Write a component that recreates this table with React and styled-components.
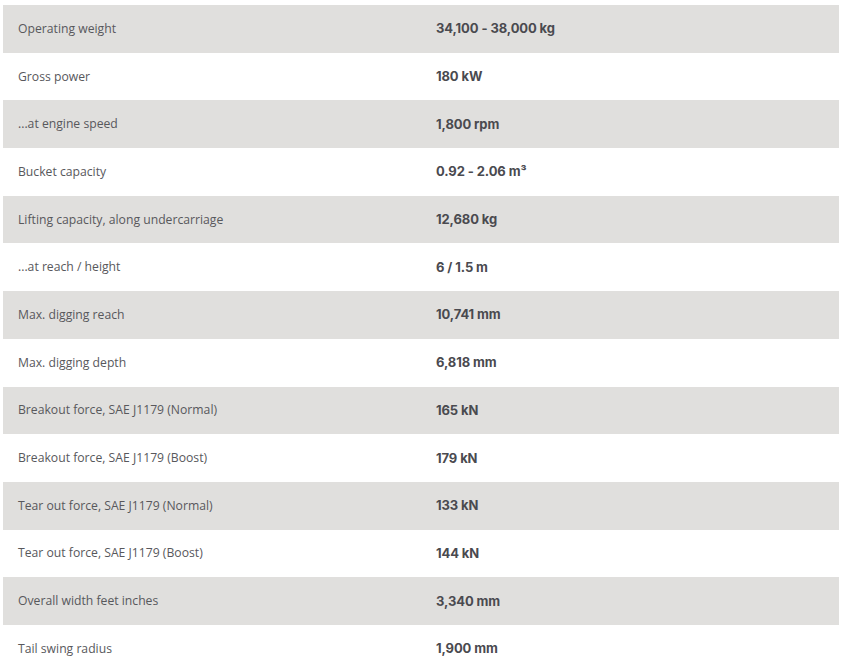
import React from "react";
import styled, { createGlobalStyle } from "styled-components";

const Global = createGlobalStyle`
  html, body { margin: 0; padding: 0; background: #fff; }
  body { padding: 5px 5px 0 3px; }
`;

const Table = styled.div`
  width: 836px;
  display: grid;
  grid-template-columns: 418px 418px;
`;

const Row = styled.div`
  display: contents;
`;

const Cell = styled.div`
  height: 47.7px;
  box-sizing: border-box;
  display: flex;
  align-items: center;
  padding: 0 15px 1px;
  background: ${(p) => (p.$shaded ? "#e0dfdd" : "#ffffff")};
  font-family: ${(p) => (p.$value ? "Inter, 'Noto Sans', sans-serif" : "'Open Sans', 'Noto Sans', sans-serif")};
  font-size: ${(p) => (p.$value ? "13px" : "12.2px")};
  font-weight: ${(p) => (p.$value ? 700 : 400)};
  color: ${(p) => (p.$value ? "#4a4a4f" : "#58585c")};
  letter-spacing: ${(p) => (p.$value ? "-0.1px" : "0")};
  white-space: nowrap;
`;

const rows = [
  ["Operating weight", "34,100 - 38,000 kg"],
  ["Gross power", "180 kW"],
  ["...at engine speed", "1,800 rpm"],
  ["Bucket capacity", "0.92 - 2.06 m³"],
  ["Lifting capacity, along undercarriage", "12,680 kg"],
  ["...at reach / height", "6 / 1.5 m"],
  ["Max. digging reach", "10,741 mm"],
  ["Max. digging depth", "6,818 mm"],
  ["Breakout force, SAE J1179 (Normal)", "165 kN"],
  ["Breakout force, SAE J1179 (Boost)", "179 kN"],
  ["Tear out force, SAE J1179 (Normal)", "133 kN"],
  ["Tear out force, SAE J1179 (Boost)", "144 kN"],
  ["Overall width feet inches", "3,340 mm"],
  ["Tail swing radius", "1,900 mm"],
];

export default function App() {
  return (
    <>
      <Global />
      <Table>
        {rows.map(([label, value], i) => (
          <Row key={label}>
            <Cell $shaded={i % 2 === 0}>{label}</Cell>
            <Cell $shaded={i % 2 === 0} $value>{value}</Cell>
          </Row>
        ))}
      </Table>
    </>
  );
}
